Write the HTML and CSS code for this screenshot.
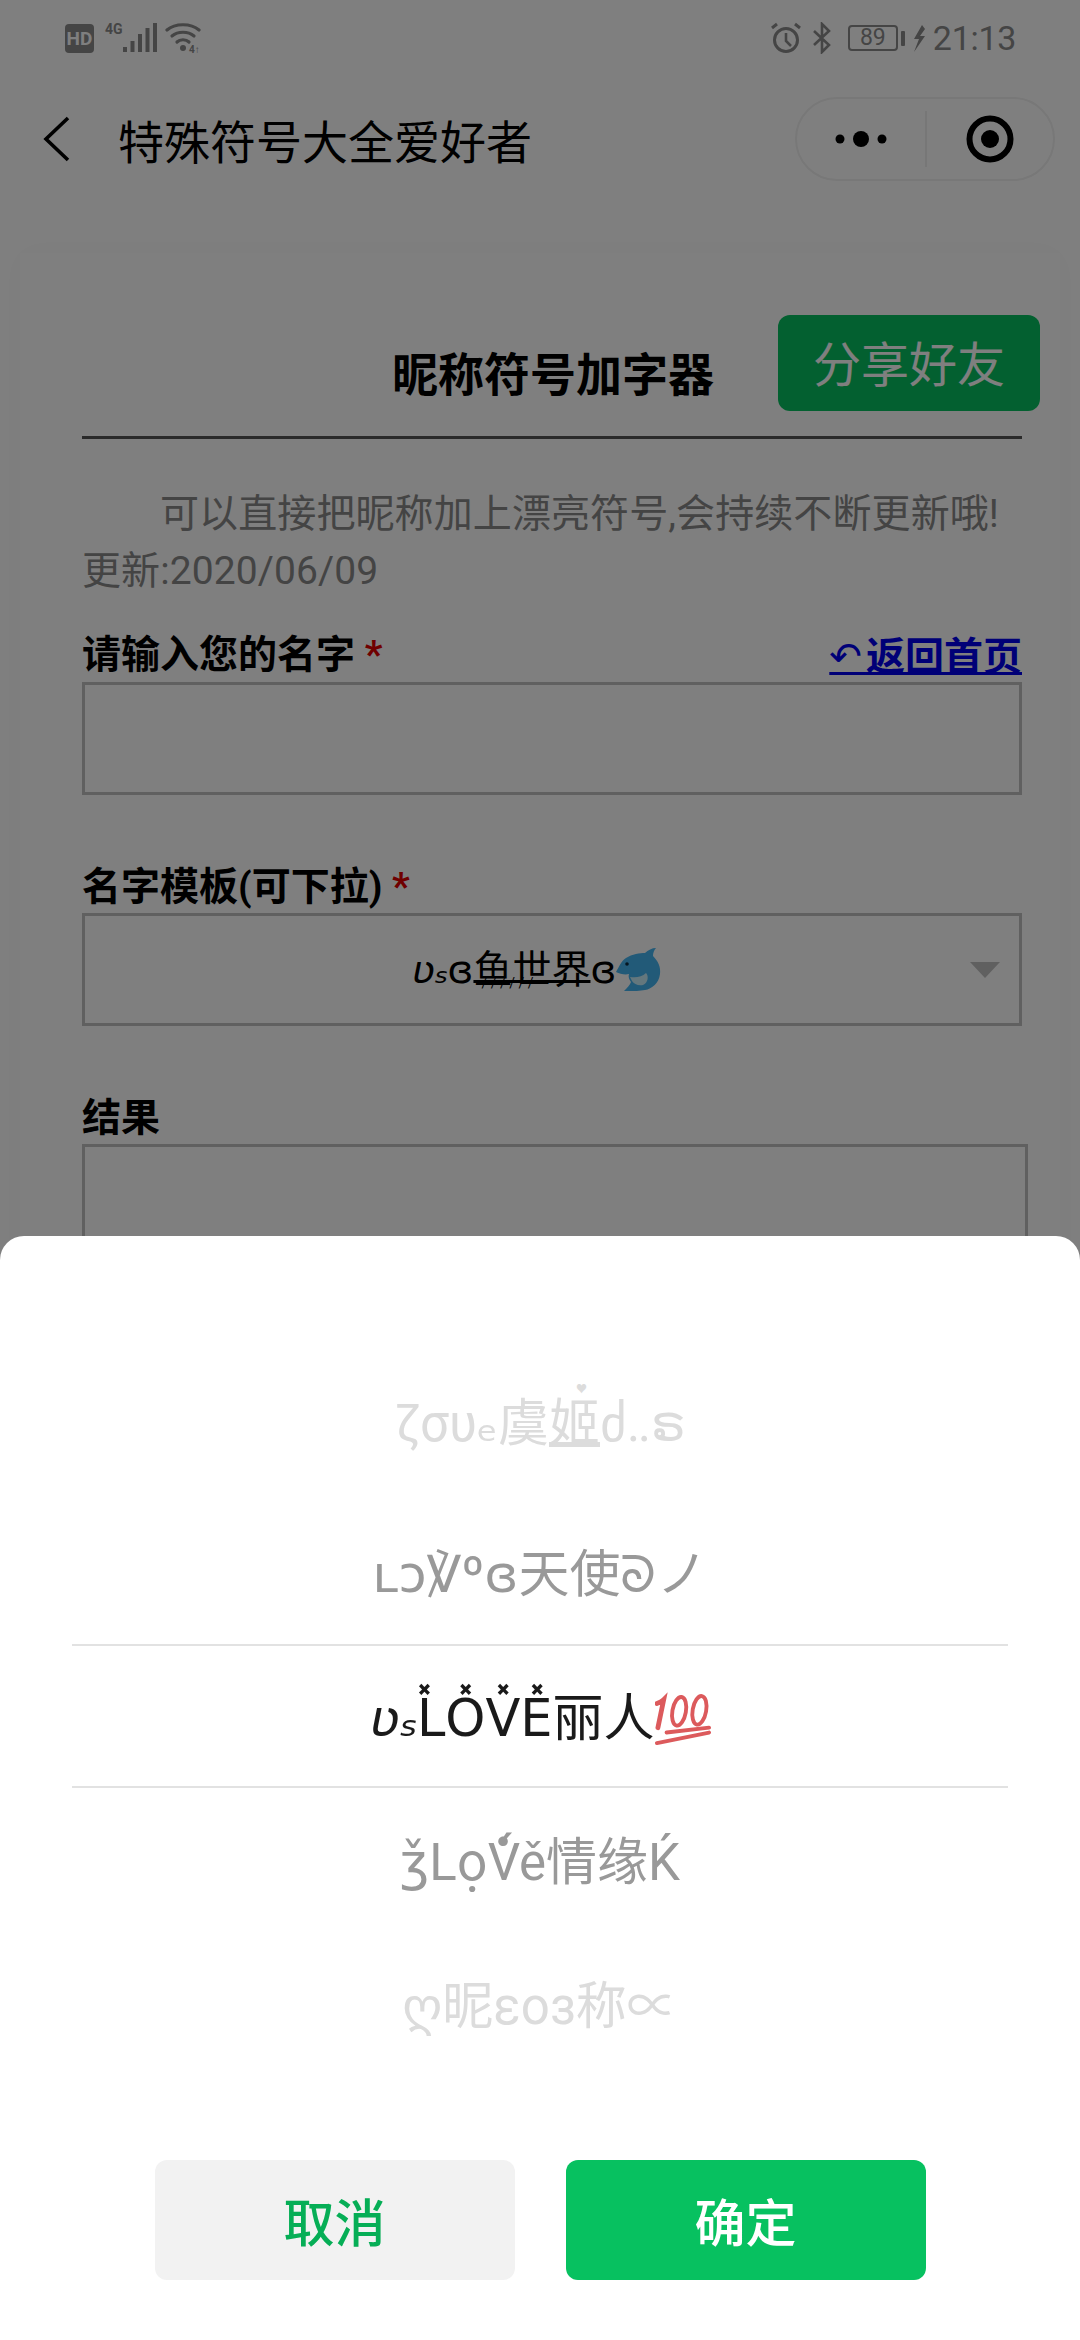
FILE: index.html
```html
<!DOCTYPE html>
<html lang="zh">
<head>
<meta charset="utf-8">
<title>昵称符号加字器</title>
<link rel="stylesheet" href="styles.css">
</head>
<body>
<div class="screen">
  <header class="status">
    <div class="status-group">
      <span class="hd">HD</span>
      <span class="net">4G</span>
      <svg class="signal" width="34" height="30" viewBox="0 0 34 30"><g fill="#8a8a8a"><rect x="0" y="24" width="4" height="5"/><rect x="7.500" y="18" width="4" height="11"/><rect x="15" y="11" width="4" height="18"/><rect x="22.500" y="5" width="4" height="24"/><rect x="30" y="0" width="4" height="29"/></g></svg>
      <svg class="wifi" width="38" height="32" viewBox="0 0 38 32"><g fill="none" stroke="#8a8a8a" stroke-width="3.200" stroke-linecap="round"><path d="M2 8C10 1 26 1 34 8"/><path d="M7 14C13 9 23 9 29 14"/><path d="M12 20C15 17 21 17 24 20"/></g><circle cx="18" cy="26" r="3" fill="#8a8a8a"/><text x="24" y="31" class="wifi-4">4↑</text></svg>
    </div>
    <div class="status-group">
      <svg class="alarm" width="32" height="32" viewBox="0 0 32 32"><g fill="none" stroke="#8a8a8a" stroke-width="3"><circle cx="16" cy="18" r="11.500"/><path d="M16 11v8l5 5" stroke-width="2.600"/><path d="M2 6l5-4M30 6l-5-4"/></g></svg>
      <svg class="bt" width="20" height="32" viewBox="0 0 20 32"><path d="M2 9l15 14-7 7V2l7 7L2 23" fill="none" stroke="#8a8a8a" stroke-width="2.600"/></svg>
      <span class="battery">89</span>
      <span class="battery-tip"></span>
      <svg class="bolt" width="14" height="27" viewBox="0 0 14 27"><path d="M10 0L2 14h5L2 27 13 11H8l5-7z" fill="#8a8a8a"/></svg>
      <span class="time">21:13</span>
    </div>
  </header>

  <nav class="nav">
    <svg class="back" width="28" height="46" viewBox="0 0 28 46"><path d="M25 2L3 23l22 21" fill="none" stroke="#000" stroke-width="3.600"/></svg>
    <span class="nav-title">特殊符号大全爱好者</span>
    <div class="capsule">
      <div class="capsule-cell capsule-more">
        <svg width="60" height="20" viewBox="0 0 60 20"><circle cx="9" cy="10" r="4.500"/><circle cx="30" cy="10" r="8"/><circle cx="51" cy="10" r="4.500"/></svg>
      </div>
      <span class="capsule-line"></span>
      <div class="capsule-cell">
        <svg width="50" height="50" viewBox="0 0 50 50"><circle cx="25" cy="25" r="20.500" fill="none" stroke="#000" stroke-width="6"/><circle cx="25" cy="25" r="9"/></svg>
      </div>
    </div>
  </nav>

  <main class="card">
    <div class="card-head">
      <span></span>
      <h1 class="card-title">昵称符号加字器</h1>
      <button class="share">分享好友</button>
    </div>
    <p class="intro">可以直接把昵称加上漂亮符号,会持续不断更新哦!<br>更新:2020/06/09</p>

    <div class="label-row">
      <label class="label">请输入您的名字 <em>*</em></label>
      <a class="home" href="#"><span class="home-icon">↶</span>返回首页</a>
    </div>
    <div class="field"></div>

    <div class="label-row gap">
      <label class="label">名字模板(可下拉) <em>*</em></label>
    </div>
    <div class="field select">
      <span class="select-text"><span class="swirl">ʋₛ</span>ɞ<span class="ticked">鱼世界</span>ɞ<svg class="dolphin" width="46" height="46" viewBox="0 0 46 46"><path d="M0 25C3 20 5 14 10 11C16 7 24 6 29 6C32 3 36 1 40 1C38 3 37 6 37 9C42 14 45 20 44 27C43 36 36 42 29 43C24 44 19 44 8 44C11 41 14 38 15 35C13 32 12 30 13 27C9 28 4 27 0 25Z" fill="#45b4f0"/><path d="M14 30C20 31 26 30 30 26C33 29 32 36 27 38C22 39 18 37 16 34Z" fill="#c8eefa"/><circle cx="11" cy="17" r="1.800" fill="#0b2c40"/></svg></span>
      <span class="caret"></span>
    </div>

    <div class="label-row gap">
      <label class="label">结果</label>
    </div>
    <div class="field result"></div>
  </main>

  <div class="dim"></div>

  <section class="sheet">
    <div class="picker">
      <div class="row far first">ζσυₑ虞<span class="ji">姬</span>ძ‥ຣ</div>
      <div class="row near">ʟɔ℣ºɞ天使ᘐノ</div>
      <div class="row current"><span class="swirl">ʋₛ</span>L̽O̽V̽E̽丽人<svg class="hundred" width="56" height="58" viewBox="0 0 58 58"><g fill="none" stroke="#dc5a5c" stroke-linecap="round"><path d="M3 38L9 9C7 11 5 12 2 13" stroke-width="5"/><ellipse cx="25" cy="21" rx="7" ry="15" transform="rotate(10 25 21)" stroke-width="4"/><ellipse cx="46" cy="20" rx="7" ry="15" transform="rotate(10 46 20)" stroke-width="4"/><path d="M12 43L56 38" stroke-width="4"/><path d="M2 54L56 43" stroke-width="4"/></g></svg></div>
      <div class="row near">ǯLọ̇V́ě情缘Ḱ</div>
      <div class="row far">ღ昵εoз称∝</div>
    </div>
    <div class="actions">
      <button class="action cancel">取消</button>
      <button class="action ok">确定</button>
    </div>
  </section>
</div>
</body>
</html>
```
FILE: styles.css
```css
* { box-sizing: border-box; }
html, body { margin: 0; padding: 0; }
body {
  background: #fff;
  font-family: Roboto, "Noto Sans CJK SC", "DejaVu Sans", sans-serif;
}
.screen {
  position: relative;
  width: 1080px;
  height: 2340px;
  overflow: hidden;
  background: #fff;
}

/* status bar */
.status {
  height: 72px;
  padding: 4px 64px 0 65px;
  display: flex;
  justify-content: space-between;
  align-items: center;
}
.status-group { display: flex; align-items: center; }
.hd {
  width: 29px;
  height: 29px;
  border-radius: 4px;
  background: #8a8a8a;
  color: #fff;
  font: 700 19px/29px Roboto, sans-serif;
  text-align: center;
}
.net {
  margin-left: 11px;
  align-self: flex-start;
  color: #8a8a8a;
  font: 700 14px/14px "Roboto", sans-serif;
  width: 17px;
}
.signal { margin-left: 1px; }
.wifi { margin-left: 8px; }
.wifi-4 { font: 700 10px Roboto, sans-serif; fill: #8a8a8a; }
.alarm { margin-right: 10px; }
.bt { margin-right: 16px; }
.battery {
  width: 50px;
  height: 26px;
  border: 2px solid #8a8a8a;
  border-radius: 4px;
  color: #8a8a8a;
  font: 400 23px/22px Roboto, sans-serif;
  text-align: center;
}
.battery-tip {
  width: 4px;
  height: 15px;
  margin-left: 3px;
  border-radius: 1px;
  background: #8a8a8a;
}
.bolt { margin-left: 7px; }
.time {
  margin-left: 7px;
  color: #8a8a8a;
  font: 400 34px/40px Roboto, sans-serif;
  letter-spacing: -.3px;
}

/* navigation */
.nav {
  display: flex;
  align-items: center;
  height: 181px;
  padding: 0 25px 47px 43px;
}
.back { flex: none; }
.nav-title {
  margin-left: 47px;
  flex: 1;
  font: 400 46px/60px "Noto Sans CJK SC", sans-serif;
  color: #000;
}
.capsule {
  display: flex;
  align-items: center;
  width: 260px;
  height: 84px;
  border: 2px solid #f0f0f0;
  border-radius: 42px;
}
.capsule-cell {
  flex: 1 1 0;
  display: flex;
  justify-content: center;
  align-items: center;
}
.capsule-more { flex: 0 0 128px; }
.capsule-line { width: 2px; height: 56px; background: #eee; }

/* card */
.card {
  margin: 0 20px;
  padding: 62px 38px 0 62px;
  background: #fff;
  height: 1200px;
  box-shadow: 0 0 30px rgba(0, 0, 0, .03);
}
.card-head {
  display: grid;
  grid-template-columns: 1fr auto 1fr;
  align-items: end;
  width: 940px;
  height: 124px;
  padding-bottom: 25px;
  border-bottom: 3px solid #555;
}
.card-title {
  margin: 0 0 10px 2px;
  font: 700 46px/60px "Noto Sans CJK SC", sans-serif;
  color: #000;
}
.share {
  justify-self: end;
  width: 262px;
  height: 96px;
  margin-right: -18px;
  padding: 0 0 5px;
  border: 0;
  border-radius: 12px;
  background: #07c160;
  color: #fff;
  font: 400 48px/60px "Noto Sans CJK SC", sans-serif;
}
.intro {
  width: 940px;
  margin: 47px 0 0;
  text-indent: 78px;
  color: #888;
  font: 400 39px/57px Roboto, "Noto Sans CJK SC", sans-serif;
  letter-spacing: .1px;
}
.label-row {
  display: flex;
  justify-content: space-between;
  align-items: center;
  width: 940px;
  height: 50px;
  padding-top: 4px;
  margin-top: 28px;
  margin-bottom: 4px;
}
.label-row.gap { margin-top: 65px; margin-bottom: 3px; }
.label {
  font: 700 39px/46px Roboto, "Noto Sans CJK SC", sans-serif;
  color: #000;
}
.label em { color: #e00000; font-style: normal; }
.home {
  color: #0000ee;
  font: 700 39px/46px "Noto Sans CJK SC", sans-serif;
  text-decoration: underline;
}
.home-icon {
  font: 400 39px/46px "DejaVu Sans", sans-serif;
  letter-spacing: 4px;
}
.field {
  width: 940px;
  height: 113px;
  border: 3px solid #c0c0c0;
}
.select {
  display: flex;
  align-items: center;
  justify-content: center;
  padding: 0 30px 0 0;
  position: relative;
}
.select-text {
  display: flex;
  align-items: center;
  color: #000;
  font: 400 39px/50px Roboto, "Noto Sans CJK SC", "DejaVu Sans", sans-serif;
}
.swirl { font-style: italic; letter-spacing: -1px; }
.ticked {
  position: relative;
  text-decoration: underline;
  text-underline-offset: -3px;
}
.ticked::after {
  content: "/ / / / / /";
  position: absolute;
  left: 8px;
  top: 28px;
  font-size: 14px;
  line-height: 20px;
  white-space: nowrap;
}
.dolphin { margin-left: 0; }
.caret {
  position: absolute;
  right: 19px;
  top: 46px;
  border-left: 15px solid transparent;
  border-right: 15px solid transparent;
  border-top: 16px solid #c0c0c0;
}
.result { width: 946px; height: 300px; }

/* dim layer & bottom sheet */
.dim {
  position: absolute;
  inset: 0;
  background: rgba(0, 0, 0, .5);
}
.sheet {
  position: absolute;
  left: 0;
  right: 0;
  top: 1236px;
  bottom: 0;
  padding-top: 120px;
  background: #fff;
  border-radius: 24px 24px 0 0;
}
.picker { margin: 0 72px; }
.row {
  display: flex;
  justify-content: center;
  align-items: center;
  height: 144px;
  padding-top: 6px;
  font: 400 51px/60px Roboto, "Noto Sans CJK SC", "DejaVu Sans", sans-serif;
  color: #1a1a1a;
}
.current {
  border-top: 2px solid #e2e2e2;
  border-bottom: 2px solid #e2e2e2;
}
.near { color: #999; }
.far { color: #dcdcdc; }
.first { padding: 0 0 9px; }
.ji {
  position: relative;
  text-decoration: underline;
  text-underline-offset: 1px;
}
.ji::before {
  content: "♥";
  position: absolute;
  left: 27px;
  top: -12px;
  font-size: 11px;
  line-height: 16px;
}
.hundred { margin-left: 0; }
.actions {
  display: flex;
  justify-content: center;
  gap: 51px;
  margin-top: 84px;
}
.action {
  width: 360px;
  height: 120px;
  border: 0;
  border-radius: 12px;
  font: 500 51px/70px "Noto Sans CJK SC", sans-serif;
}
.cancel { background: #f2f2f2; color: #06ae56; }
.ok { background: #07c160; color: #fff; }
```
